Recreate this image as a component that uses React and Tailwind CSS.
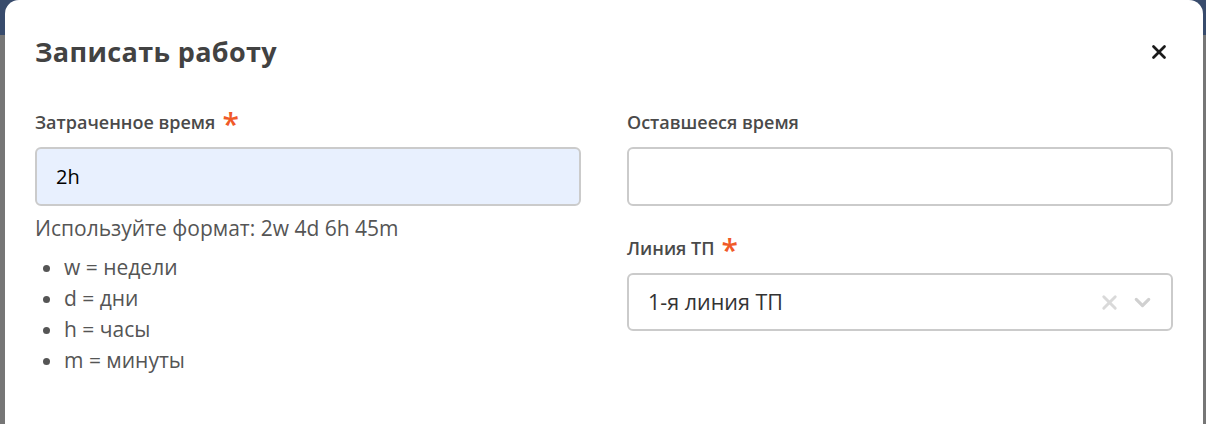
import { X, ChevronDown } from "lucide-react";

function Label({ children, required }) {
  return (
    <label className="flex items-center gap-[7px] text-[18px] font-semibold text-[#4a4a4a] h-[24px]">
      {children}
      {required && <span className="text-[#f05a28] text-[30px] leading-none mt-[4px]">*</span>}
    </label>
  );
}

export default function App() {
  return (
    <div className="h-[424px] overflow-hidden bg-[linear-gradient(to_bottom,#384b6c_35px,#767676_35px)] px-[5px] pr-[3px] font-['Open_Sans',sans-serif]">
      <div className="h-full bg-white rounded-t-[14px] px-[30px] pt-[33px]">
        {/* HEADER */}
        <div className="flex items-center justify-between h-[38px]">
          <h2 className="text-[27px] font-bold text-[#424242] tracking-[0.35px]">Записать работу</h2>
          <button className="text-[#1b1b1b] mr-[3px]">
            <X size={22} strokeWidth={3} />
          </button>
        </div>

        {/* FORM */}
        <div className="grid grid-cols-2 gap-[46px] mt-[39px]">
          <div>
            <Label required>Затраченное время</Label>
            <input
              defaultValue="2h"
              className="mt-[13px] w-full h-[59px] bg-[#e8f0fe] border-2 border-[#cbcbcb] rounded-[6px] px-[19px] text-[20px] text-black outline-none"
            />
            <p className="mt-[7px] text-[21px] text-[#555] leading-[30px]">Используйте формат: 2w 4d 6h 45m</p>
            <ul className="mt-[9px] text-[21px] text-[#555] leading-[31px] list-disc pl-[29px]">
              <li>w = недели</li>
              <li>d = дни</li>
              <li>h = часы</li>
              <li>m = минуты</li>
            </ul>
          </div>

          <div>
            <Label>Оставшееся время</Label>
            <input className="mt-[13px] w-full h-[59px] bg-white border-2 border-[#cbcbcb] rounded-[6px] px-[19px] text-[20px] outline-none" />

            <div className="mt-[30px]">
              <Label required>Линия ТП</Label>
              <div className="mt-[13px] w-full h-[58px] flex items-center border-2 border-[#cbcbcb] rounded-[6px] pl-[19px] pr-[16px]">
                <span className="flex-1 text-[21.5px] text-[#333]">1-я линия ТП</span>
                <X size={23} strokeWidth={3} className="text-[#d9d9d9]" />
                <ChevronDown size={25} strokeWidth={3} className="text-[#d0d0d0] ml-[9px]" />
              </div>
            </div>
          </div>
        </div>
      </div>
    </div>
  );
}
